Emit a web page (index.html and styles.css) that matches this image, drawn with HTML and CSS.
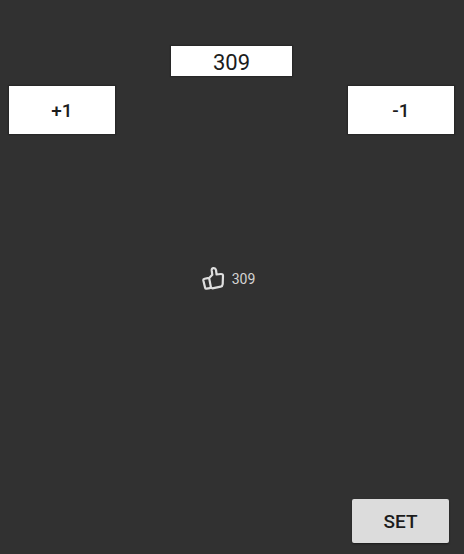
FILE: index.html
```html
<!DOCTYPE html>
<html lang="en">
<head>
<meta charset="utf-8">
<meta name="viewport" content="width=device-width, initial-scale=1">
<title>Counter</title>
<link rel="stylesheet" href="styles.css">
</head>
<body>
<main class="screen">
  <input class="count-input" type="text" inputmode="numeric" value="309" aria-label="Count">
  <div class="steps">
    <button class="step" type="button">+1</button>
    <button class="step" type="button">-1</button>
  </div>
  <div class="likes">
    <svg class="thumb" viewBox="0 0 24 26" aria-hidden="true">
      <path d="M7.2 12 10.3 8.8 9.7 4.4Q9.6 2.4 11.5 2.2 13.5 2 14 4L14.6 8.5 18.9 8Q21 7.9 21 9.8L20.7 18.2Q20.5 20.3 18.7 20.7L10.4 22.3 8.4 21.6"/>
      <path d="M2.6 12.8 5.8 12.1Q7 11.9 7.3 13L8.8 20.6Q9 21.9 7.8 22.1L4.6 22.7Q3.4 22.9 3.1 21.7L1.3 14.3Q1.1 13.1 2.6 12.8Z"/>
    </svg>
    <span>309</span>
  </div>
  <button class="set" type="button">SET</button>
</main>
</body>
</html>
```
FILE: styles.css
```css
* {
  box-sizing: border-box;
}

body {
  margin: 0;
  background: #313131;
  color: #1c1c1c;
  font-family: Roboto, "Liberation Sans", sans-serif;
}

.screen {
  display: flex;
  flex-direction: column;
  min-height: 100vh;
  padding: 46px 10px 11px 9px;
}

.count-input {
  align-self: center;
  width: 121px;
  height: 30px;
  padding: 2px 0 0;
  border: 0;
  background: #fff;
  color: inherit;
  font: 400 22px/28px Roboto, "Liberation Sans", sans-serif;
  text-align: center;
  box-shadow: 0 0 1px 1px #282828;
}

.steps {
  display: flex;
  justify-content: space-between;
  margin-top: 10px;
}

.step,
.set {
  border: 0;
  padding: 2px 0 0;
  color: inherit;
  font: 500 19px/24px Roboto, "Liberation Sans", sans-serif;
  text-align: center;
}

.step {
  width: 106px;
  height: 48px;
  background: #fff;
  box-shadow: 0 0 1px 1px #282828;
}

.likes {
  display: flex;
  align-items: center;
  justify-content: center;
  gap: 6px;
  margin: auto 6px auto 0;
  padding-bottom: 76px;
  color: #d4d4d4;
  font-size: 14px;
  line-height: 18px;
}

.thumb {
  width: 24px;
  height: 26px;
  fill: none;
  stroke: #dedede;
  stroke-width: 2.2;
  stroke-linecap: round;
  stroke-linejoin: round;
}

.set {
  align-self: flex-end;
  width: 97px;
  height: 44px;
  margin-right: 5px;
  border-radius: 2px;
  background: #dcdcdc;
  box-shadow: 0 1px 2px #1c1c1c;
}
```
